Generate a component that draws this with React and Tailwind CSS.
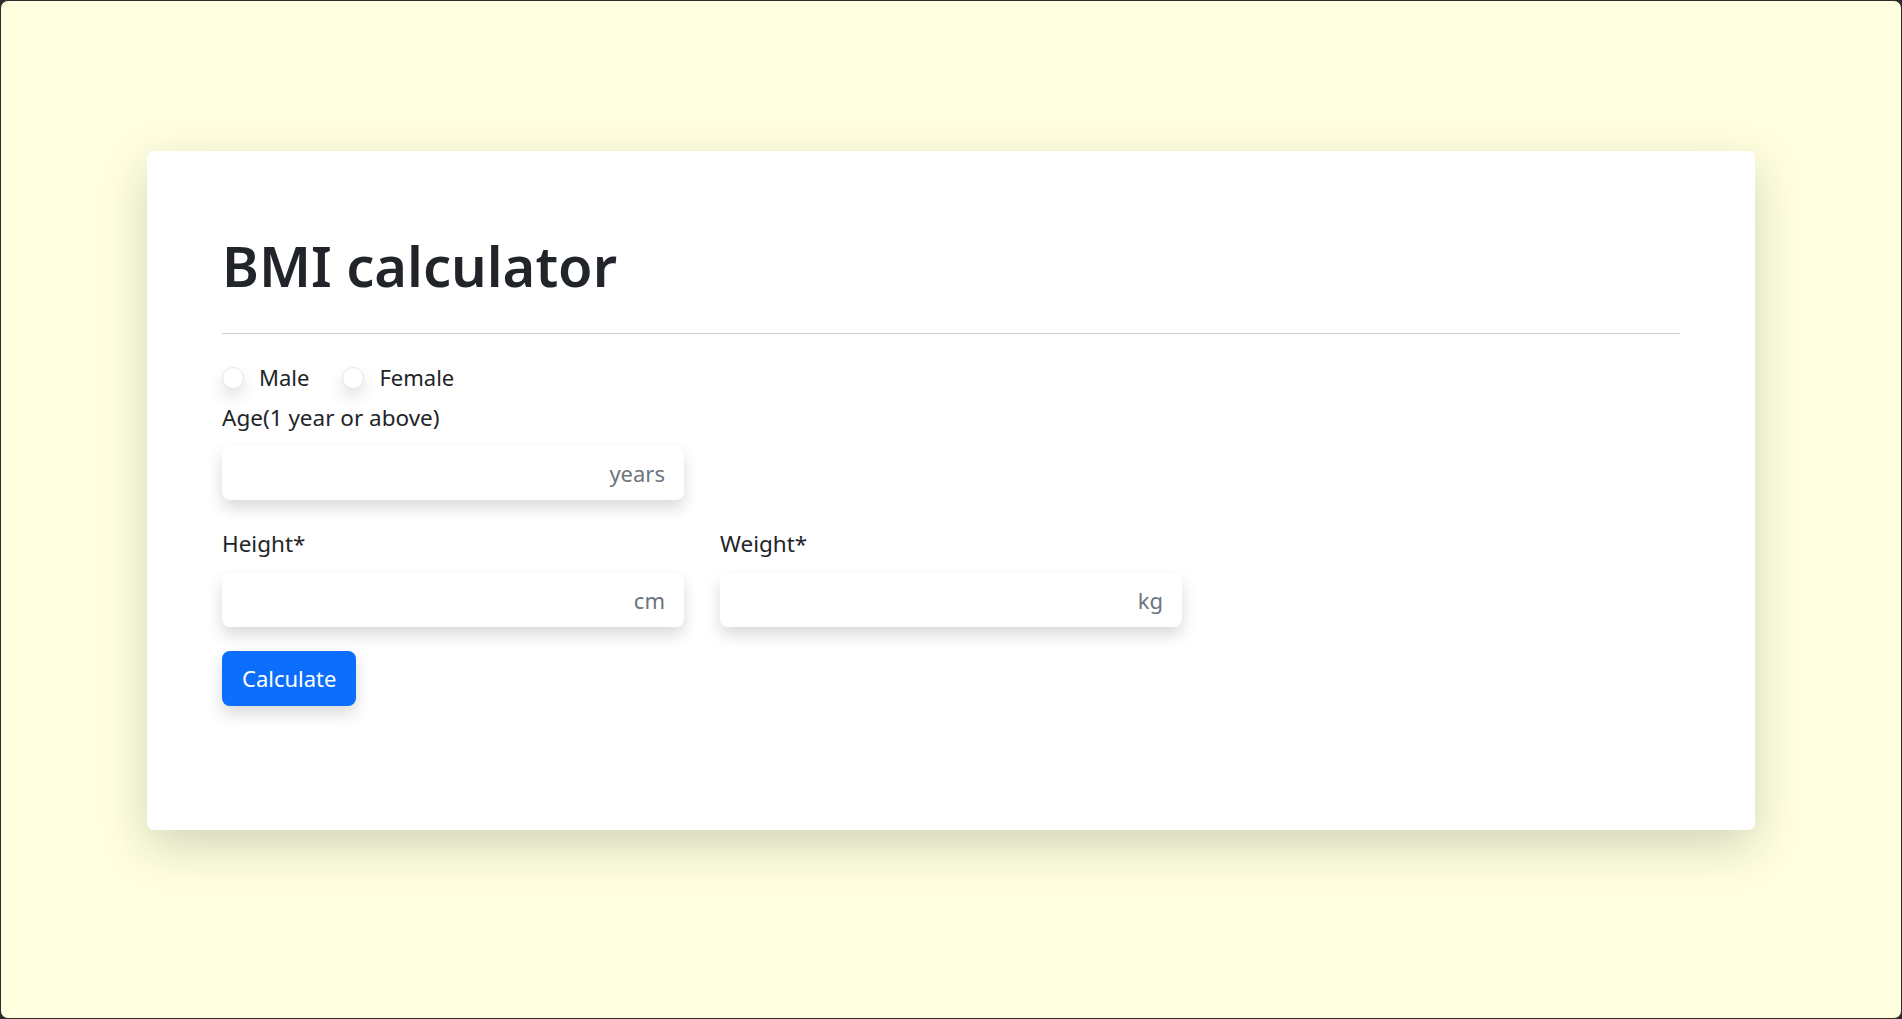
// BMI calculator form card on a light yellow page

function UnitInput({ unit }) {
  return (
    <input
      type="text"
      placeholder={unit}
      className="w-[462px] h-[54px] rounded-[8px] bg-white px-[19px] text-right text-[22px] text-[#212529] placeholder:text-[#6c757d] shadow-[0_8px_16px_rgba(0,0,0,0.15)] outline-none"
    />
  );
}

function Radio({ label }) {
  return (
    <label className="flex items-center gap-[15px]">
      <span className="w-[22px] h-[22px] rounded-full bg-white border border-[#e3e5e8] shadow-[0_8px_16px_rgba(0,0,0,0.12)]" />
      <span>{label}</span>
    </label>
  );
}

export default function App() {
  return (
    <div className="w-full h-[1019px] bg-[#2b2b2b]">
      <div
        className="h-full rounded-[8px] border border-[#2b2b2b] bg-[#ffffe0] pt-[150px]"
        style={{ fontFamily: '"Noto Sans", "Open Sans", sans-serif' }}
      >
        <div className="mx-auto w-[1608px] rounded-[7px] bg-white px-[75px] pt-[79px] pb-[124px] text-[#212529] shadow-[0_16px_48px_rgba(0,0,0,0.175)]">
          <h1 className="text-[56px] leading-[70px] font-semibold">BMI calculator</h1>
          <hr className="mt-[33px] border-0 border-t border-[#cbcccd]" />

          <div className="mt-[27px] flex items-center gap-[33px] text-[22px] leading-[33px]">
            <Radio label="Male" />
            <Radio label="Female" />
          </div>

          <div className="mt-[7px] text-[22.5px] leading-[33px]">Age(1 year or above)</div>
          <div className="mt-[12px]">
            <UnitInput unit="years" />
          </div>

          <div className="mt-[27px] flex gap-[36px]">
            <div className="flex flex-col gap-[13px]">
              <span className="text-[22.5px] leading-[33px]">Height*</span>
              <UnitInput unit="cm" />
            </div>
            <div className="flex flex-col gap-[13px]">
              <span className="text-[22.5px] leading-[33px]">Weight*</span>
              <UnitInput unit="kg" />
            </div>
          </div>

          <button className="mt-[24px] h-[55px] rounded-[8px] bg-[#0d6efd] px-[20px] text-[22px] text-white shadow-[0_8px_16px_rgba(0,0,0,0.15)]">
            Calculate
          </button>
        </div>
      </div>
    </div>
  );
}
